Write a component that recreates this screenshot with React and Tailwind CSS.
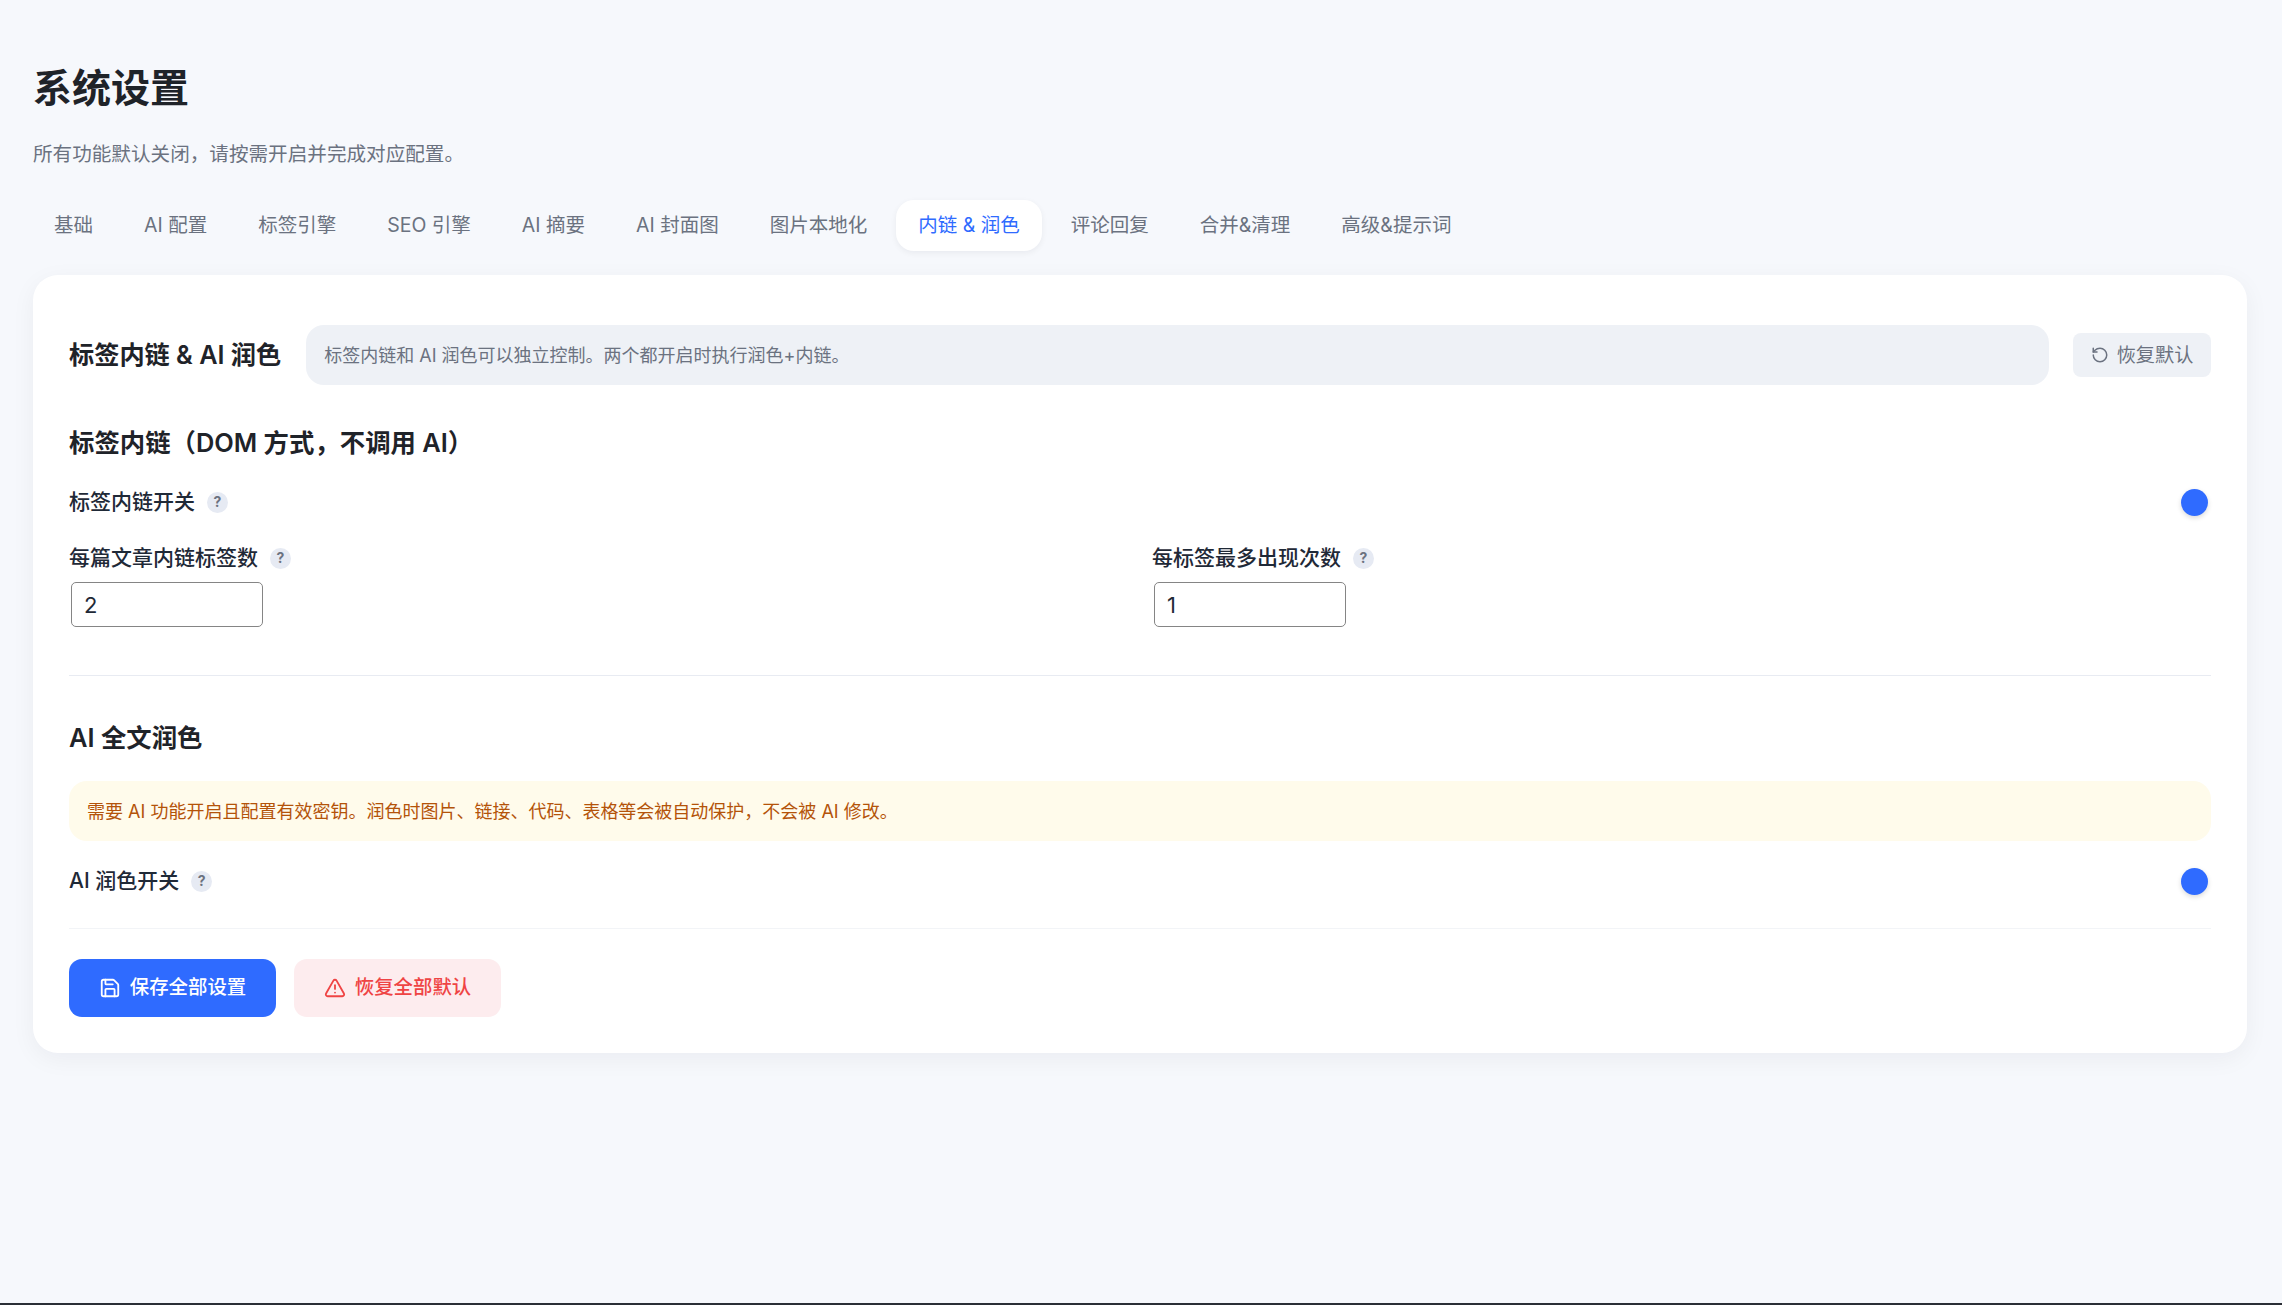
import React from 'react'
import { RotateCcw, Save, TriangleAlert } from 'lucide-react'

const tabs = ['基础', 'AI 配置', '标签引擎', 'SEO 引擎', 'AI 摘要', 'AI 封面图', '图片本地化', '内链 & 润色', '评论回复', '合并&清理', '高级&提示词']

function Help() {
  return (
    <span className="ml-[12px] flex h-[21px] w-[21px] items-center justify-center rounded-full bg-[#e6eaf3] text-[14px] leading-none font-bold text-[#6b7280]">?</span>
  )
}

function Label({ children }) {
  return (
    <div className="flex items-center text-[21px] leading-[30px] font-medium text-[#1f2937]">
      {children}
      <Help />
    </div>
  )
}

function ToggleRow({ label }) {
  return (
    <div className="flex h-[30px] items-center justify-between">
      <Label>{label}</Label>
      <span className="mr-[3px] h-[27px] w-[27px] rounded-full bg-[#2f6bff] shadow-[0_2px_5px_rgba(0,0,0,0.15)]" />
    </div>
  )
}

function NumberField({ label, value }) {
  return (
    <div>
      <Label>{label}</Label>
      <input
        type="text"
        defaultValue={value}
        className="mt-[9px] ml-[2px] block h-[45px] w-[192px] rounded-[5px] border-[1.5px] border-[#858585] bg-white px-[12px] text-[22px] text-[#1f2937] outline-none"
      />
    </div>
  )
}

export default function App() {
  return (
    <div className="min-h-[1305px] border-b-2 border-[#2b2f36] bg-[#f6f8fc] pt-[64px] pr-[35px] pl-[33px] font-['Inter','Noto_Sans_CJK_SC',sans-serif]">
      <h1 className="text-[39px] leading-[48px] font-bold text-[#1f2329]">系统设置</h1>
      <p className="mt-[27px] text-[19.6px] leading-[30px] text-[#6b7280]">所有功能默认关闭，请按需开启并完成对应配置。</p>

      <div className="mt-[31px] -ml-[1px] flex gap-[7px]">
        {tabs.map(t => (
          <div
            key={t}
            className={t === '内链 & 润色'
              ? 'flex h-[51px] items-center rounded-[18px] bg-white px-[22px] text-[19.5px] text-[#2f6bff] shadow-[0_2px_6px_rgba(15,23,42,0.06)]'
              : 'flex h-[51px] items-center rounded-[18px] px-[22px] text-[19.5px] text-[#6b7280]'}
          >
            {t}
          </div>
        ))}
      </div>

      <div className="mt-[24px] rounded-[25px] bg-white p-[36px] pt-[50px] shadow-[0_6px_24px_rgba(15,23,42,0.05)]">
        <div className="flex items-center">
          <h2 className="text-[25.2px] leading-[36px] font-semibold text-[#1f2329]">标签内链 &amp; AI 润色</h2>
          <div className="ml-[25px] flex h-[60px] flex-1 items-center rounded-[18px] bg-[#eef1f6] px-[18px] text-[18px] text-[#6b7280]">
            标签内链和 AI 润色可以独立控制。两个都开启时执行润色+内链。
          </div>
          <button className="ml-[24px] flex h-[44px] w-[138px] items-center justify-center gap-[8px] rounded-[8px] bg-[#eef1f6] text-[19.2px] text-[#6b7280]">
            <RotateCcw size={18} />
            恢复默认
          </button>
        </div>

        <h3 className="mt-[40px] text-[25.4px] leading-[36px] font-semibold text-[#1f2329]">标签内链（DOM 方式，不调用 AI）</h3>
        <div className="mt-[26px]">
          <ToggleRow label="标签内链开关" />
        </div>
        <div className="mt-[26px] grid grid-cols-2 gap-[24px]">
          <NumberField label="每篇文章内链标签数" value="2" />
          <NumberField label="每标签最多出现次数" value="1" />
        </div>

        <div className="mt-[48px] border-t-[1.5px] border-[#e8ebf2]" />

        <h3 className="mt-[44px] text-[25.4px] leading-[36px] font-semibold text-[#1f2329]">AI 全文润色</h3>
        <div className="mt-[25px] flex h-[60px] items-center rounded-[18px] bg-[#fffbeb] px-[18px] text-[18px] text-[#b45309]">
          需要 AI 功能开启且配置有效密钥。润色时图片、链接、代码、表格等会被自动保护，不会被 AI 修改。
        </div>
        <div className="mt-[25px]">
          <ToggleRow label="AI 润色开关" />
        </div>

        <div className="mt-[32px] border-t-[1.5px] border-[#f2f4f7]" />

        <div className="mt-[30px] flex gap-[18px]">
          <button className="flex h-[58px] w-[207px] items-center justify-center gap-[9px] rounded-[13px] bg-[#2f6bff] text-[19.4px] font-medium text-white">
            <Save size={22} />
            保存全部设置
          </button>
          <button className="flex h-[58px] w-[207px] items-center justify-center gap-[9px] rounded-[13px] bg-[#fdecee] text-[19.4px] font-medium text-[#ef4444]">
            <TriangleAlert size={22} />
            恢复全部默认
          </button>
        </div>
      </div>
    </div>
  )
}
